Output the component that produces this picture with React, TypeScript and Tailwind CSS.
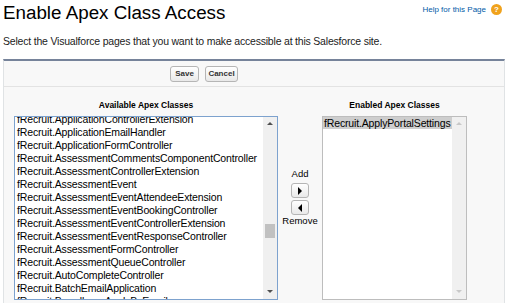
const available = [
  'fRecruit.ApplicationControllerExtension',
  'fRecruit.ApplicationEmailHandler',
  'fRecruit.ApplicationFormController',
  'fRecruit.AssessmentCommentsComponentController',
  'fRecruit.AssessmentControllerExtension',
  'fRecruit.AssessmentEvent',
  'fRecruit.AssessmentEventAttendeeExtension',
  'fRecruit.AssessmentEventBookingController',
  'fRecruit.AssessmentEventControllerExtension',
  'fRecruit.AssessmentEventResponseController',
  'fRecruit.AssessmentFormController',
  'fRecruit.AssessmentQueueController',
  'fRecruit.AutoCompleteController',
  'fRecruit.BatchEmailApplication',
  'fRecruit.BroadbeanApplyByEmail',
];

// fake native scrollbar of a <select multiple>
function Scrollbar({ thumb, disabled }: { thumb?: boolean; disabled?: boolean }) {
  return (
    <div className="w-[14px] bg-[#f0f0f0] flex flex-col items-center justify-between pt-[5px] pb-[6px] relative">
      <div
        className={
          disabled
            ? 'w-0 h-0 border-x-[3px] border-x-transparent border-b-[3px] border-b-[#c8c8c8]'
            : 'w-0 h-0 border-x-[3px] border-x-transparent border-b-[3px] border-b-[#505050]'
        }
      />
      {thumb && <div className="absolute left-[2px] top-[107px] w-[10px] h-[14px] bg-[#c1c1c1]" />}
      <div
        className={
          disabled
            ? 'w-0 h-0 border-x-[3px] border-x-transparent border-t-[3px] border-t-[#c8c8c8]'
            : 'w-0 h-0 border-x-[3px] border-x-transparent border-t-[3px] border-t-[#505050]'
        }
      />
    </div>
  );
}

const btn = 'rounded-[3px] border border-[#b5b5b5] bg-gradient-to-b from-white to-[#e9e9e9] text-[#333]';

export default function App() {
  return (
    <div className="w-[509px] h-[303px] bg-white overflow-hidden font-['Liberation_Sans',Arial,sans-serif] text-[#222]">
      <div className="flex items-start justify-between pl-[3px] pr-[7px]">
        <h1 className="text-[18.8px] leading-[21px] pt-[2px] text-black">Enable Apex Class Access</h1>
        <div className="flex items-center gap-[5px] pt-[4px]">
          <span className="text-[8px] leading-[10px] text-[#015ba7]">Help for this Page</span>
          <span className="w-[11px] h-[11px] rounded-full bg-[#f0a21c] text-white text-[8px] font-bold leading-[11px] text-center">?</span>
        </div>
      </div>
      <p className="text-[10.5px] tracking-[-0.2px] leading-[12px] mt-[12px] pl-[3px] text-[#222]">
        Select the Visualforce pages that you want to make accessible at this Salesforce site.
      </p>
      <div className="mt-[12px] ml-[3px] w-[502px] h-[245px] border-t-2 border-t-[#76839a] border-x border-x-[#e0e3e5] bg-[#f8f8f8]">
        <div className="flex gap-[6px] pt-[5px] pb-[4px] pl-[166px] border-b border-[#e3e3e3]">
          <button className={`h-[16px] w-[29px] text-[8px] font-bold ${btn}`}>Save</button>
          <button className={`h-[16px] w-[33px] text-[8px] font-bold ${btn}`}>Cancel</button>
        </div>
        <div className="flex pl-[10px] pt-[12px]">
          <div className="flex flex-col items-center w-[264px]">
            <div className="text-[8.5px] font-bold text-black leading-[13px]">Available Apex Classes</div>
            <div className="flex w-[264px] h-[184px] mt-[4px] border border-[#7da2ce] bg-white">
              <div className="flex-1 overflow-hidden">
                <div className="-mt-[4px] pl-[2px]">
                  {available.map((a) => (
                    <div key={a} className="text-[10.5px] tracking-[-0.15px] leading-[13px] whitespace-nowrap text-black">{a}</div>
                  ))}
                </div>
              </div>
              <Scrollbar thumb />
            </div>
          </div>
          <div className="w-[44px] flex flex-col items-center pt-[69px]">
            <span className="text-[9.5px] leading-[11px] text-black">Add</span>
            <button className={`mt-[4px] w-[18px] h-[15px] flex items-center justify-center ${btn}`}>
              <span className="w-0 h-0 border-y-[4px] border-y-transparent border-l-[4px] border-l-black" />
            </button>
            <button className={`mt-[2px] w-[18px] h-[15px] flex items-center justify-center ${btn}`}>
              <span className="w-0 h-0 border-y-[4px] border-y-transparent border-r-[4px] border-r-black" />
            </button>
            <span className="text-[9.5px] leading-[11px] text-black">Remove</span>
          </div>
          <div className="flex flex-col items-center w-[145px]">
            <div className="text-[8.5px] font-bold text-black leading-[13px]">Enabled Apex Classes</div>
            <div className="flex w-[145px] h-[184px] mt-[4px] border border-[#bdbdbd] bg-white">
              <div className="flex-1 overflow-hidden">
                <div className="text-[10.5px] tracking-[-0.15px] leading-[12px] whitespace-nowrap text-black bg-[#cecece] pl-[1px]">fRecruit.ApplyPortalSettings</div>
              </div>
              <Scrollbar disabled />
            </div>
          </div>
        </div>
      </div>
    </div>
  );
}
